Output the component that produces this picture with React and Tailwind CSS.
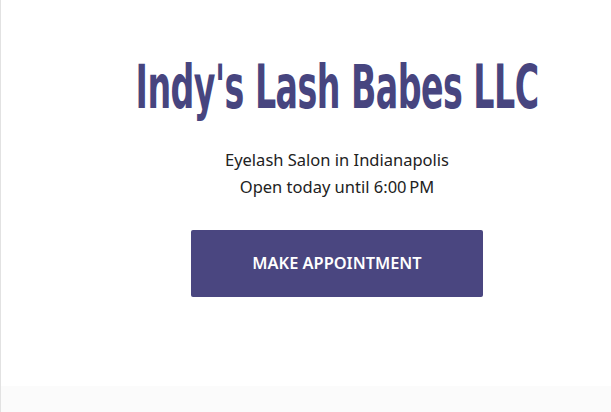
export default function App() {
  return (
    <div className="flex h-[412px] w-[611px] flex-col overflow-hidden border-l border-[#e2e2e2] bg-white">
      {/* Hero */}
      <div className="flex flex-1 flex-col items-center pl-[62px] pt-[57px]">
        <h1 className="scale-x-[0.555] whitespace-nowrap font-['DejaVu_Sans',sans-serif] text-[60px] font-bold leading-[60px] tracking-[-1px] text-[#47457f]">
          Indy's Lash Babes LLC
        </h1>

        <div className="mt-[29px] flex flex-col items-center font-['Noto_Sans',sans-serif] text-[16.5px] leading-[27px] text-[#222]">
          <p>Eyelash Salon in Indianapolis</p>
          <p>Open today until 6:00{"\u202F"}PM</p>
        </div>

        <button className="mt-[30px] flex h-[67px] w-[292px] items-center justify-center rounded-[2px] bg-[#4a4680] font-['Noto_Sans',sans-serif] text-[16.4px] font-semibold text-white">
          MAKE APPOINTMENT
        </button>
      </div>

      {/* faint footer strip */}
      <div className="h-[26px] bg-[#fbfbfb]" />
    </div>
  );
}
